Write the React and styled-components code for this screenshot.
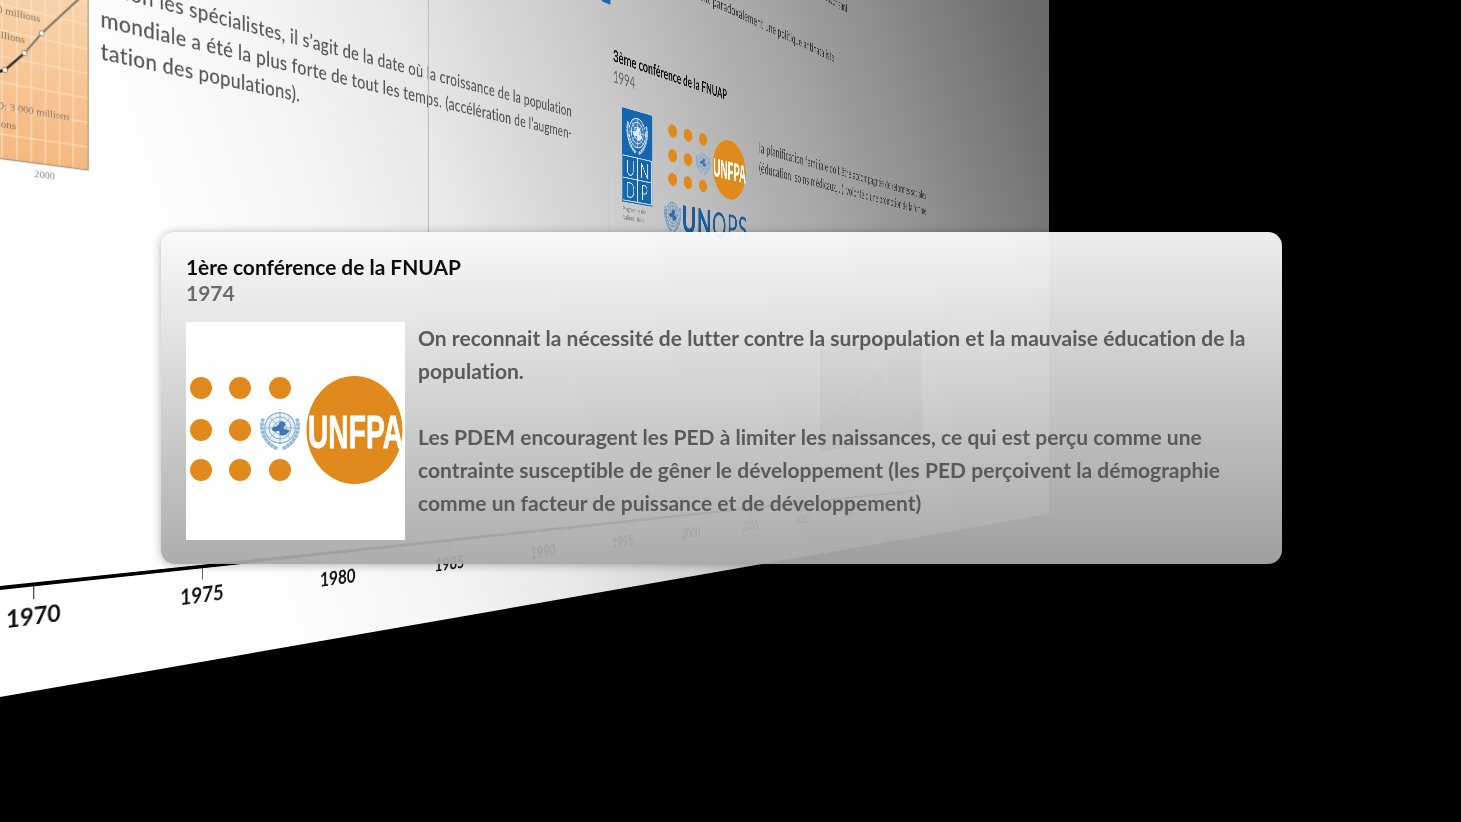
import React from "react";
import styled, { createGlobalStyle } from "styled-components";

const GlobalStyle = createGlobalStyle`
  html, body {
    margin: 0;
    background: #000;
  }
`;

// the slide wall seen in perspective: x' = vx*u/(u+d), y' = (vy*u + v*d)/(u+d)
const wallMatrix = (vx, vy, d) =>
  `matrix3d(${vx / d},${vy / d},0,${1 / d}, 0,1,0,0, 0,0,1,0, 0,0,0,1)`;

const Stage = styled.div`
  position: relative;
  width: 1461px;
  height: 822px;
  overflow: hidden;
  background: #000;
  font-family: Lato, "Liberation Sans", sans-serif;
`;

const Wall = styled.div`
  position: absolute;
  left: 0;
  top: 0;
  width: 1049px;
  height: 697px;
  clip-path: polygon(0 0, 1049px 0, 1049px 514px, 0 697px);
  background: linear-gradient(
    72deg,
    #fff 22%,
    #f4f4f4 38%,
    #e8e8e8 48%,
    #c9c9c9 63%,
    #a4a4a4 78%,
    #6e6e6e 97%,
    #6a6a6a 100%
  );
  filter: blur(0.45px);
`;

const Plane = styled.div`
  position: absolute;
  left: 0;
  top: 0;
  width: 3800px;
  height: 800px;
  transform-origin: 0 0;
  transform: ${(p) => p.$matrix};
`;

const Paragraph = styled.p`
  position: absolute;
  left: ${(p) => p.$u}px;
  top: ${(p) => p.$v}px;
  margin: 0;
  white-space: nowrap;
  font-size: ${(p) => p.$size}px;
  line-height: ${(p) => p.$leading}px;
  font-weight: ${(p) => p.$weight || 400};
  color: ${(p) => p.$color || "#4e4e4e"};
  letter-spacing: ${(p) => p.$track || 0}px;
`;

const Divider = styled.div`
  position: absolute;
  left: ${(p) => p.$u}px;
  top: ${(p) => p.$v}px;
  width: 2px;
  height: ${(p) => p.$height}px;
  background: ${(p) => p.$color};
`;

const ChartFrame = styled.svg`
  position: absolute;
  left: -10px;
  top: -40px;
  width: 104px;
  height: 230px;
  overflow: visible;
  filter: blur(0.5px);
`;

const BlueTab = styled.div`
  position: absolute;
  left: 1029px;
  top: -300px;
  width: 25px;
  height: 56px;
  background: #1666ad;
`;

const Conference = styled.div`
  position: absolute;
  left: 1062px;
  top: -177px;
`;

const ConferenceTitle = styled.div`
  font-size: 29px;
  line-height: 36px;
  font-weight: 700;
  color: #111;
  white-space: nowrap;
`;

const ConferenceYear = styled.div`
  font-size: 29px;
  line-height: 36px;
  color: #5f5f5f;
`;

const ConferenceRow = styled.div`
  display: flex;
  align-items: flex-start;
  gap: 48px;
  margin: 32px 0 0 27px;
`;

const UndpMark = styled.svg`
  flex: none;
  width: 97px;
  height: 200px;
  overflow: visible;
`;

const PartnerColumn = styled.div`
  flex: none;
  display: flex;
  flex-direction: column;
  width: 306px;
  margin-top: 5px;
`;

const UnfpaSmall = styled.svg`
  display: block;
  width: 306px;
  height: 121px;
`;

const UnopsRow = styled.div`
  display: flex;
  align-items: center;
  gap: 2px;
  margin: 14px 0 0 -9px;
  font-size: 70px;
  line-height: 72px;
  color: #1b5c9c;
  font-weight: 900;
  letter-spacing: 3px;
  white-space: nowrap;
  svg {
    flex: none;
    width: 60px;
    height: 72px;
  }
  span span {
    font-weight: 400;
  }
`;

const ConferenceNote = styled.p`
  margin: -21px 0 0 5px;
  white-space: nowrap;
  font-size: 30px;
  line-height: 42px;
  letter-spacing: 1.15px;
  color: #3f3f3f;
`;

const Photo = styled.div`
  position: absolute;
  left: 1887px;
  top: 331px;
  width: 646px;
  height: 258px;
  background: linear-gradient(160deg, #555, #2c2c2c);
  display: flex;
  align-items: center;
  justify-content: center;
  &::before {
    content: "";
    width: 150px;
    height: 120px;
    border: 10px solid #666;
    border-radius: 50%;
  }
`;

const Axis = styled.div`
  position: absolute;
  left: -64px;
  top: 586px;
  width: 2200px;
  display: flex;
  border-top: 4px solid #000;
`;

const Tick = styled.div`
  flex: 0 0 197px;
  display: flex;
  flex-direction: column;
  align-items: center;
  color: #111;
  font-size: 24.5px;
  line-height: 26px;
  font-weight: 700;
  &::before {
    content: "";
    width: 1.5px;
    height: 13px;
    margin-bottom: 4px;
    background: #111;
  }
`;

const Card = styled.section`
  position: absolute;
  left: 161px;
  top: 232px;
  width: 1121px;
  height: 332px;
  box-sizing: border-box;
  padding: 22px 25px 0;
  border-radius: 14px;
  background: linear-gradient(180deg, rgba(250, 250, 250, 0.95), rgba(168, 168, 168, 0.94));
  box-shadow: 0 1px 10px rgba(0, 0, 0, 0.3);
`;

const CardTitle = styled.h1`
  margin: 0;
  font-size: 20.9px;
  line-height: 26px;
  font-weight: 700;
  color: #0e0e0e;
`;

const CardYear = styled.div`
  font-size: 21px;
  line-height: 26px;
  font-weight: 700;
  color: #6c6c6c;
`;

const CardBody = styled.div`
  display: flex;
  gap: 13px;
  margin-top: 16px;
`;

const LogoTile = styled.div`
  flex: 0 0 219px;
  height: 218px;
  background: #fff;
  svg {
    display: block;
    width: 219px;
    height: 218px;
  }
`;

const CardText = styled.p`
  margin: -1px 0 0;
  width: 850px;
  font-size: 21px;
  line-height: 33px;
  font-weight: 700;
  letter-spacing: 0.03px;
  color: #5a5a5a;
`;

function Emblem({ x, y, size, color, land }) {
  const r = size / 2;
  return (
    <g transform={`translate(${x - r} ${y - r}) scale(${size / 40})`} fill="none" stroke={color}>
      <circle cx="20" cy="18" r="15" fill={color} fillOpacity="0.18" stroke="none" />
      <circle cx="20" cy="18" r="14.5" strokeWidth="1" />
      <circle cx="20" cy="18" r="10.5" strokeWidth="0.9" />
      <circle cx="20" cy="18" r="6" strokeWidth="0.8" />
      <path d="M20 3.5v29M5.5 18h29M10 8l20 20M30 8L10 28" strokeWidth="0.7" />
      <path
        d="M12 19c3-4 5-1 7-5 1-3 5-3 6 0 1 2-3 3-1 5 2 1 5 0 5 2-2 3-5 5-9 4-1-2 1-4-2-4-2 0-4 2-6-2z"
        fill={land || color}
        stroke="none"
      />
      <path
        d="M4 9C0 21 6 33 18 38M36 9c4 12-2 24-14 29"
        strokeWidth="3.4"
        strokeDasharray="3.4 0.5"
        opacity="0.8"
      />
    </g>
  );
}

const DOTS = [
  [15, 66], [54, 66], [94, 66],
  [15, 108], [54, 108],
  [15, 148], [54, 148], [94, 148],
];

function UnfpaMark() {
  return (
    <>
      {DOTS.map(([cx, cy]) => (
        <circle key={`${cx}-${cy}`} cx={cx} cy={cy} r="11" fill="#e08a1e" />
      ))}
      <Emblem x={94} y={108} size={42} color="#7ba7d0" land="#3f78b0" />
      <ellipse cx="168.5" cy="108" rx="48" ry="54" fill="#e08a1e" />
      <text
        x="122"
        y="126"
        fill="#fff"
        stroke="#fff"
        strokeWidth="0.8"
        fontFamily="'Liberation Sans Narrow', 'Liberation Sans', sans-serif"
        fontWeight="700"
        fontSize="46"
        textLength="95"
        lengthAdjust="spacingAndGlyphs"
      >
        UNFPA
      </text>
    </>
  );
}

function Undp() {
  return (
    <UndpMark viewBox="0 0 97 200" preserveAspectRatio="none">
      <rect width="97" height="165" fill="#1666ad" />
      <Emblem x={48} y={42} size={72} color="#dfe9f3" />
      <g stroke="#fff" strokeWidth="1.5" fill="none">
        <rect x="3" y="83" width="91" height="79" />
        <path d="M48.5 83v79M3 122h91" />
      </g>
      <g fill="#fff" fontSize="38" fontWeight="300" textAnchor="middle" fontFamily="Lato, sans-serif">
        <text x="26" y="117">U</text>
        <text x="71" y="117">N</text>
        <text x="26" y="156">D</text>
        <text x="71" y="156">P</text>
      </g>
      <g fill="#777" fontSize="11" fontFamily="Lato, sans-serif">
        <text x="2" y="181">Programme des</text>
        <text x="2" y="196">Nations Unies</text>
      </g>
    </UndpMark>
  );
}

function Chart() {
  const verticals = [2, 17, 32, 47, 62, 77];
  const horizontals = [-22, 4, 30, 56, 82, 108, 134];
  return (
    <ChartFrame viewBox="-10 -40 104 230">
      <defs>
        <linearGradient id="chartFill" x1="0" y1="0" x2="0" y2="1">
          <stop offset="0" stopColor="#f9d8b0" />
          <stop offset="1" stopColor="#f5b87f" />
        </linearGradient>
      </defs>
      <rect x="-10" y="-40" width="104" height="198.5" fill="url(#chartFill)" />
      {verticals.map((x) => (
        <path key={x} d={`M${x} -40V158`} stroke="#fce6cc" strokeWidth="1" />
      ))}
      {horizontals.map((y) => (
        <path key={y} d={`M-10 ${y}H94`} stroke="#fce6cc" strokeWidth="1.2" />
      ))}
      <path d="M94 -40V158.5H-10" fill="none" stroke="#b49a82" strokeWidth="1.4" />
      <g fill="#8b7360" fontSize="11" fontFamily="'Liberation Serif', serif">
        <text x="-3" y="13">0 millions</text>
        <text x="-30" y="38">000 millions</text>
        <text x="-7" y="109">60: 3 000 millions</text>
        <text x="-20" y="127">millions</text>
      </g>
      <path d="M-10 76L5 69" stroke="#2b2420" strokeWidth="3" fill="none" />
      <path d="M5 69L25 48" stroke="#3d342e" strokeWidth="2.5" fill="none" />
      <path d="M25 48L43 24L86 -24" stroke="#8a7a6c" strokeWidth="2" fill="none" />
      {[[5, 69], [25, 48], [43, 24]].map(([cx, cy]) => (
        <circle key={cx} cx={cx} cy={cy} r="2.6" fill="#fff" stroke="#8a7a6c" strokeWidth="0.8" />
      ))}
      <text x="46" y="173" textAnchor="middle" fill="#8b8b8b" fontSize="11" fontFamily="'Liberation Serif', serif">
        2000
      </text>
    </ChartFrame>
  );
}

const YEARS = [1970, 1975, 1980, 1985, 1990, 1995, 2000, 2005, 2010, 2015];

export default function App() {
  return (
    <Stage>
      <GlobalStyle />
      <Wall>
        <Plane $matrix={wallMatrix(1450, 347, 1450)}>
          <Chart />
          <Paragraph $u={108} $v={-60} $size={25.5} $leading={35.5} $track={0.38} $weight={500} $color="#555">
            Selon les spécialistes, il s’agit de la date où la croissance de la population
            <br />
            mondiale a été la plus forte de tout les temps. (accélération de l’augmen-
            <br />
            tation des populations).
          </Paragraph>
          <Divider $u={607} $v={-400} $height={800} $color="#bdbdbd" />
          <Divider $u={1047} $v={-170} $height={500} $color="#c4c9cd" />
          <BlueTab />
          <Paragraph $u={1918} $v={-486} $size={28} $leading={36} $color="#333">
            favorisant
          </Paragraph>
          <Paragraph $u={1350} $v={-353} $size={28} $leading={36} $track={1} $color="#333">
            ent paradoxalement une politique antinataliste
          </Paragraph>
          <Conference>
            <ConferenceTitle>3ème conférence de la FNUAP</ConferenceTitle>
            <ConferenceYear>1994</ConferenceYear>
            <ConferenceRow>
              <Undp />
              <PartnerColumn>
                <UnfpaSmall viewBox="0 55 220 110" preserveAspectRatio="none">
                  <UnfpaMark />
                </UnfpaSmall>
                <UnopsRow>
                  <svg viewBox="0 0 60 72" preserveAspectRatio="none">
                    <Emblem x={30} y={36} size={62} color="#5f93c4" land="#2f6aa6" />
                  </svg>
                  <span>
                    UN<span>OPS</span>
                  </span>
                </UnopsRow>
              </PartnerColumn>
              <ConferenceNote>
                la planification familiale doit être accompagnée de réformes sociales
                <br />
                (éducation, soins médicaux,...), volonté d’une promotion de la femme
              </ConferenceNote>
            </ConferenceRow>
          </Conference>
          <Photo />
        </Plane>
        <Plane $matrix={wallMatrix(1600, 418, 1600)}>
          <Axis>
            {YEARS.map((year) => (
              <Tick key={year}>{year}</Tick>
            ))}
          </Axis>
        </Plane>
      </Wall>
      <Card>
        <CardTitle>1ère conférence de la FNUAP</CardTitle>
        <CardYear>1974</CardYear>
        <CardBody>
          <LogoTile>
            <svg viewBox="0 0 219 218">
              <UnfpaMark />
            </svg>
          </LogoTile>
          <CardText>
            On reconnait la nécessité de lutter contre la surpopulation et la mauvaise éducation de la
            population.
            <br />
            <br />
            Les PDEM encouragent les PED à limiter les naissances, ce qui est perçu comme une
            contrainte susceptible de gêner le développement (les PED perçoivent la démographie
            comme un facteur de puissance et de développement)
          </CardText>
        </CardBody>
      </Card>
    </Stage>
  );
}
